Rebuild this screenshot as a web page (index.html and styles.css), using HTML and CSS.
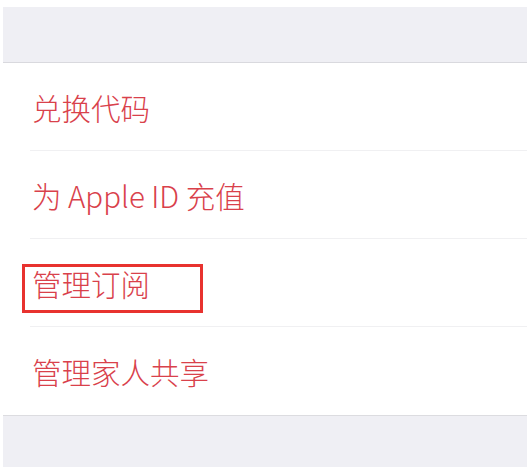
FILE: index.html
```html
<!DOCTYPE html>
<html lang="zh-CN">
<head>
    <meta charset="UTF-8">
    <meta name="viewport" content="width=device-width, initial-scale=1.0">
    <title>Apple ID</title>
    <link rel="stylesheet" href="styles.css">
</head>
<body>
    <div class="screen">
        <div class="band band-top"></div>
        <ul class="menu">
            <li class="menu-item">兑换代码</li>
            <li class="menu-item">为 Apple ID 充值</li>
            <li class="menu-item marked">管理订阅</li>
            <li class="menu-item">管理家人共享</li>
        </ul>
        <div class="band band-bottom"></div>
    </div>
</body>
</html>
```

FILE: styles.css
```css
body {
    margin: 0;
    padding: 0;
    background: #fff;
    font-family: "Noto Sans CJK SC", "Noto Sans", sans-serif;
}
.screen {
    width: 527px;
    height: 467px;
    padding-top: 7px;
    box-sizing: border-box;
    overflow: hidden;
}
.band {
    margin-left: 3px;
    background: #efeff4;
}
.band-top {
    height: 55px;
    border-bottom: 1px solid #d9d9de;
}
.band-bottom {
    height: 60px;
    border-top: 1px solid #dcdce0;
}
.menu {
    list-style: none;
    margin: 0;
    padding: 0 0 0 30px;
}
.menu-item {
    position: relative;
    height: 87px;
    display: flex;
    align-items: center;
    padding-left: 2px;
    font-size: 29.5px;
    font-weight: 300;
    color: #d9414b;
    border-bottom: 1px solid #f0f0f2;
}
.menu-item:last-child {
    border-bottom: none;
    height: 88px;
}
.marked::after {
    content: "";
    position: absolute;
    left: -8px;
    top: 25px;
    width: 175px;
    height: 43px;
    border: 3px solid #e8322f;
}
```
